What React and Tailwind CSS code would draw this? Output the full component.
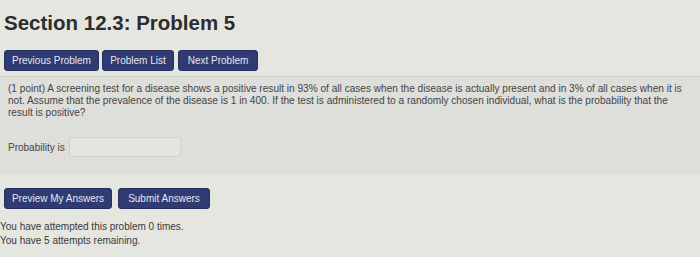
import React from "react";

function Btn({ children, className = "" }) {
  return (
    <button
      className={
        "h-[21px] rounded-[3px] bg-[#2f3b72] px-[6px] text-[10px] leading-none text-[#e4e6f0] border border-[#26305e] " +
        className
      }
    >
      {children}
    </button>
  );
}

export default function App() {
  return (
    <div
      className="w-[700px] h-[257px] overflow-hidden bg-[#e6e6e1] text-[#3a3a3a]"
      style={{ fontFamily: "'Liberation Sans', Arial, sans-serif" }}
    >
      <h1 className="pl-[4px] pt-[11px] text-[20.5px] font-bold leading-[24px] text-[#2d2d2d]">
        Section 12.3: Problem 5
      </h1>

      <div className="mt-[15px] flex gap-[3px] pl-[4px]">
        <Btn className="w-[95px]">Previous Problem</Btn>
        <Btn className="w-[72px]">Problem List</Btn>
        <Btn className="w-[80px] ml-[1px]">Next Problem</Btn>
      </div>

      {/* problem box */}
      <div className="mt-[5px] h-[98px] border-t border-[#cfcfca] bg-[#dededa] pl-[8px] pt-[6px]">
        <p className="text-[10.1px] leading-[12px] text-[#454545]">
          <span className="block whitespace-nowrap">
            (1 point) A screening test for a disease shows a positive result in 93% of all cases when the disease is actually present and in 3% of all cases when it is
          </span>
          <span className="block whitespace-nowrap">
            not. Assume that the prevalence of the disease is 1 in 400. If the test is administered to a randomly chosen individual, what is the probability that the
          </span>
          <span className="block">result is positive?</span>
        </p>
        <div className="mt-[18px] flex items-center gap-[4px]">
          <span className="text-[10px] text-[#454545]">Probability is</span>
          <div className="h-[20px] w-[112px] rounded-[2px] border border-[#d2d2cd] bg-[#e4e4e0]" />
        </div>
      </div>

      <div className="mt-[14px] flex gap-[6px] pl-[4px]">
        <Btn className="w-[108px]">Preview My Answers</Btn>
        <Btn className="w-[92px]">Submit Answers</Btn>
      </div>

      <div className="mt-[11px] text-[10px] leading-[14px] text-[#3a3a3a]">
        <p>You have attempted this problem 0 times.</p>
        <p>You have 5 attempts remaining.</p>
      </div>
    </div>
  );
}
